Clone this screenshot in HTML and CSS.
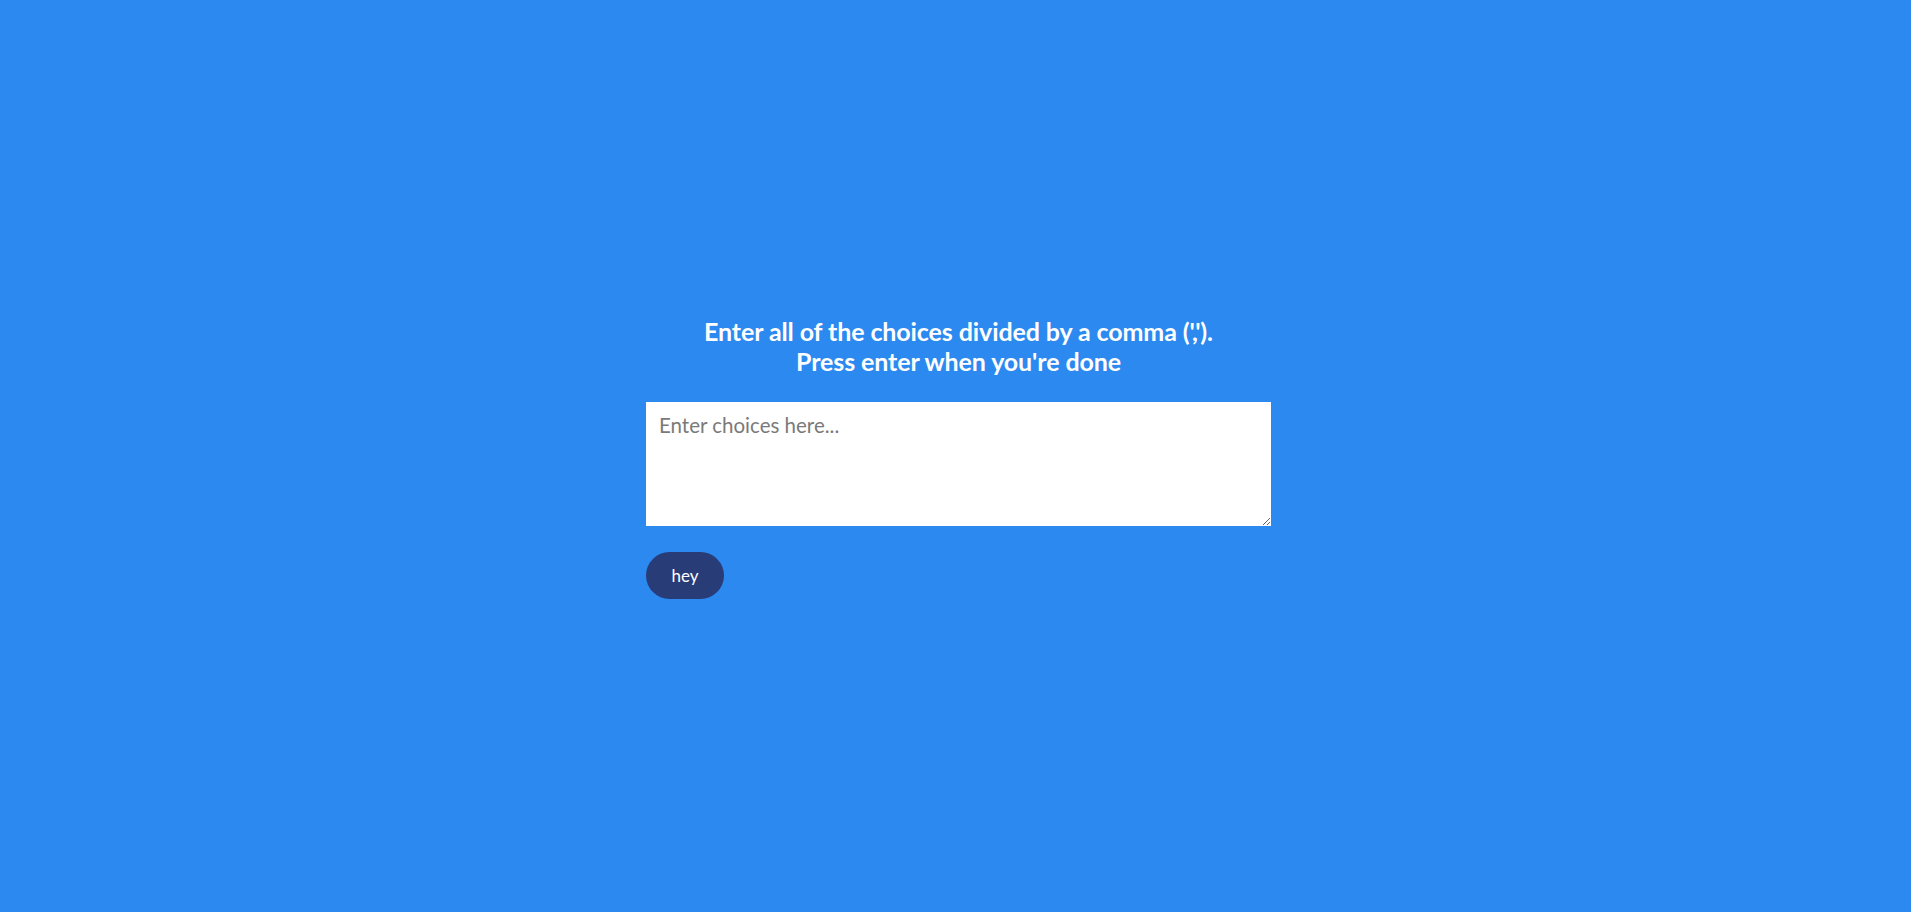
FILE: index.html
```html
<!DOCTYPE html>
<html>
<head>
<meta charset="utf-8">
<link rel="stylesheet" href="styles.css">
</head>
<body>
<main class="page">
  <section class="panel">
    <h1 class="title">Enter all of the choices divided by a comma (',').<br>Press enter when you're done</h1>
    <textarea class="choices" placeholder="Enter choices here..."></textarea>
    <div class="actions"><button class="btn">hey</button></div>
  </section>
</main>
</body>
</html>
```
FILE: styles.css
```css
html, body {
  margin: 0;
  background: #2c89f0;
}
body {
  font-family: Lato, "Open Sans", sans-serif;
}
.page {
  display: flex;
  justify-content: center;
  padding-top: 316px;
  padding-left: 6px;
}
.panel {
  width: 625px;
  display: flex;
  flex-direction: column;
}
.title {
  margin: 0 0 26px;
  text-align: center;
  color: #fff;
  font-size: 25px;
  line-height: 30px;
  font-weight: 700;
  letter-spacing: -0.1px;
}
.choices {
  box-sizing: border-box;
  width: 625px;
  height: 124px;
  border: none;
  outline: none;
  margin: 0;
  padding: 11px 13px;
  font-family: Lato, "Open Sans", sans-serif;
  font-size: 20.5px;
  color: #333;
  background: #fff;
  border-radius: 0;
  display: block;
}
.choices::placeholder {
  color: #7a7a7a;
}
.actions {
  margin-top: 26px;
}
.btn {
  width: 78px;
  height: 47px;
  border: none;
  border-radius: 24px;
  background: #283c78;
  color: #fff;
  font-family: Lato, "Open Sans", sans-serif;
  font-size: 17px;
  cursor: pointer;
}
```
